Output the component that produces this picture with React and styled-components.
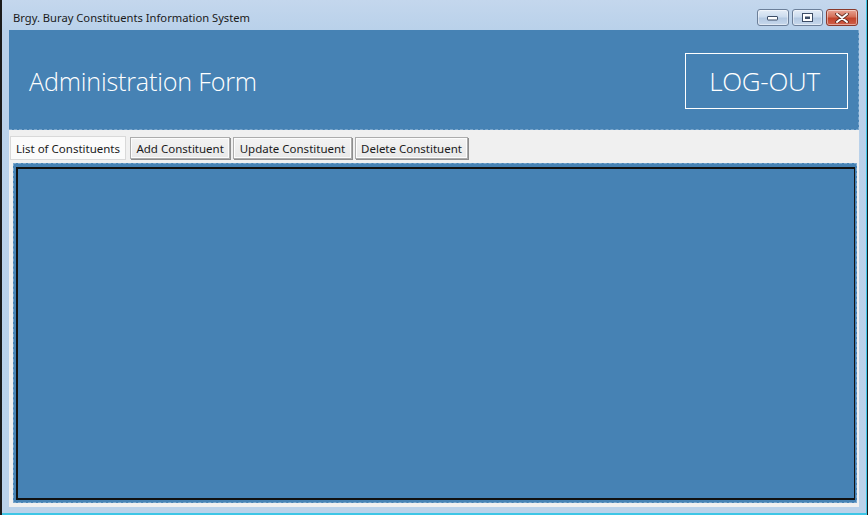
import React from "react";
import styled, { createGlobalStyle } from "styled-components";

const Global = createGlobalStyle`
  html, body { margin: 0; padding: 0; background: #ffffff; }
  body { font-family: "Open Sans", "Noto Sans", sans-serif; }
`;

const Window = styled.div`
  width: 868px;
  height: 515px;
  box-sizing: border-box;
  display: flex;
  flex-direction: column;
  background: linear-gradient(#c4d7ed 0px, #b9d1ea 30px, #bad2ea 100%);
  border-left: 2px solid #1b1b1b;
  border-right: 1px solid #1b1b1b;
  box-shadow: inset -1px 0 0 #3ec6e6, inset 0 -2px 0 #3ec6e6;
  padding: 0 8px 8px 7px;
  overflow: hidden;
`;

const TitleBar = styled.div`
  height: 30px;
  flex: none;
  display: flex;
  align-items: flex-start;
  justify-content: space-between;
`;

const Title = styled.div`
  font-family: "Noto Sans", "Open Sans", sans-serif;
  font-size: 11.2px;
  color: #1a1a1a;
  padding: 10px 0 0 4px;
  line-height: 16px;
`;

const Controls = styled.div`
  display: flex;
  gap: 3px;
  margin-top: 9px;
  margin-right: 1px;
`;

const CtlButton = styled.div`
  width: ${(p) => p.$w}px;
  height: 17px;
  box-sizing: border-box;
  border: 1px solid ${(p) => (p.$close ? "#8a3a2c" : "#6c7f99")};
  border-radius: 3px;
  background: ${(p) =>
    p.$close
      ? "linear-gradient(#e8a393 0%, #d46f58 45%, #c2432a 55%, #d0604a 100%)"
      : "linear-gradient(#e4edf7 0%, #ccdcee 45%, #b4c9e2 55%, #c7d8ec 100%)"};
  box-shadow: inset 0 0 0 1px rgba(255, 255, 255, 0.45);
  display: flex;
  align-items: center;
  justify-content: center;
`;

const Client = styled.div`
  flex: 1;
  display: flex;
  flex-direction: column;
  background: #f0f0f0;
`;

const Header = styled.div`
  height: 100px;
  flex: none;
  box-sizing: border-box;
  background: #4682b4;
  border: 1px dashed #7aa6cc;
  border-top: none;
  border-left: none;
  display: flex;
  align-items: center;
  justify-content: space-between;
  padding: 0 10px 0 20px;
`;

const HeaderTitle = styled.div`
  font-family: "Open Sans", sans-serif;
  font-weight: 300;
  font-size: 25.2px;
  color: #ffffff;
  letter-spacing: -0.2px;
  margin-top: 3px;
`;

const LogoutBox = styled.div`
  width: 163px;
  height: 56px;
  box-sizing: border-box;
  border: 1px solid #ffffff;
  display: flex;
  align-items: center;
  justify-content: center;
  padding-right: 4px;
  font-family: "Open Sans", sans-serif;
  font-weight: 300;
  font-size: 26px;
  color: #ffffff;
  letter-spacing: -0.3px;
  margin-top: 3px;
`;

const Body = styled.div`
  flex: 1;
  display: flex;
  flex-direction: column;
  padding: 6px 2px 4px 1px;
`;

const TabStrip = styled.div`
  display: flex;
  align-items: flex-end;
  gap: 3px;
  height: 24px;
  flex: none;
`;

const Tab = styled.div`
  height: ${(p) => (p.$active ? 24 : 22)}px;
  box-sizing: border-box;
  padding: 0 ${(p) => (p.$active ? 5 : 5.4)}px;
  margin-right: ${(p) => (p.$active ? 1 : 0)}px;
  margin-bottom: ${(p) => (p.$active ? 0 : 1)}px;
  display: flex;
  align-items: center;
  font-family: "Noto Sans", "Open Sans", sans-serif;
  font-size: 11.5px;
  color: #1a1a1a;
  background: ${(p) =>
    p.$active ? "#fbfbfb" : "linear-gradient(#f3f3f3, #e9e9e9)"};
  border: 1px solid ${(p) => (p.$active ? "#d9d9d9" : "#acacac")};
  box-shadow: ${(p) =>
    p.$active ? "none" : "inset 0 0 0 1px #fcfcfc, 1px 1px 0 #8e8e8e"};
  white-space: nowrap;
`;

const TabPage = styled.div`
  flex: 1;
  margin: 3px 0 0 3px;
  background: #4682b4;
  border: 1px dashed #7aa6cc;
  padding: 3px 1px 2px 2px;
  display: flex;
`;

const Panel = styled.div`
  flex: 1;
  background: #4682b4;
  border: 2px solid #111111;
  border-right-width: 1px;
`;

export default function App() {
  return (
    <>
      <Global />
      <Window>
        <TitleBar>
          <Title>Brgy. Buray Constituents Information System</Title>
          <Controls>
            <CtlButton $w={32}>
              <svg width="12" height="6" viewBox="0 0 12 6">
                <rect x="0.5" y="1.5" width="10" height="3.5" rx="0.5" fill="#ffffff" stroke="#3c4c66" />
              </svg>
            </CtlButton>
            <CtlButton $w={31}>
              <svg width="11" height="9" viewBox="0 0 11 9">
                <rect x="0.5" y="0.5" width="10" height="8" fill="#ffffff" stroke="#3c4c66" />
                <rect x="3" y="3.5" width="5" height="2.5" fill="#3c4c66" />
              </svg>
            </CtlButton>
            <CtlButton $w={32} $close>
              <svg width="14" height="10" viewBox="0 0 14 10">
                <path d="M2 1 L12 9 M12 1 L2 9" stroke="#5b2a20" strokeWidth="3.6" strokeLinecap="round" />
                <path d="M2 1 L12 9 M12 1 L2 9" stroke="#ffffff" strokeWidth="2" strokeLinecap="round" />
              </svg>
            </CtlButton>
          </Controls>
        </TitleBar>
        <Client>
          <Header>
            <HeaderTitle>Administration Form</HeaderTitle>
            <LogoutBox>LOG-OUT</LogoutBox>
          </Header>
          <Body>
            <TabStrip>
              <Tab $active>List of Constituents</Tab>
              <Tab>Add Constituent</Tab>
              <Tab>Update Constituent</Tab>
              <Tab>Delete Constituent</Tab>
            </TabStrip>
            <TabPage>
              <Panel />
            </TabPage>
          </Body>
        </Client>
      </Window>
    </>
  );
}
